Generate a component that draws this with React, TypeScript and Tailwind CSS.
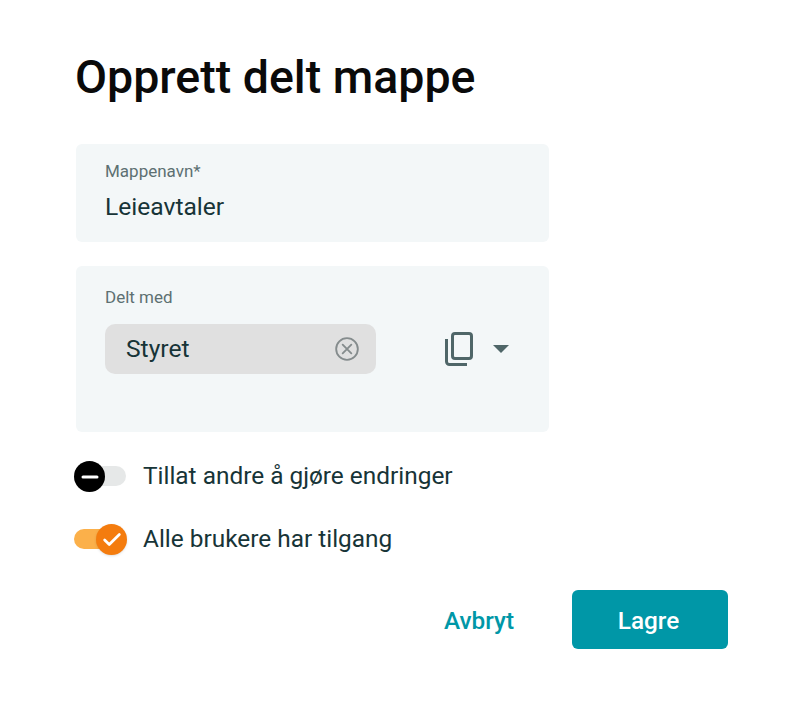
import React from 'react';
import { Check, Minus } from 'lucide-react';

const CopyIcon = () => (
  <svg width="28" height="34" viewBox="0 0 28 34" fill="none" stroke="#4f6668" strokeWidth="3">
    <rect x="7.5" y="1.5" width="19" height="25" rx="2.5" />
    <path d="M1.5 7V29.5C1.5 31.2 2.8 32.5 4.5 32.5H22" />
  </svg>
);

const ClearIcon = () => (
  <svg width="26" height="26" viewBox="0 0 24 24" fill="none" stroke="#858c8d" strokeWidth="1.7" strokeLinecap="round">
    <circle cx="12" cy="12" r="10" />
    <path d="M8 8L16 16M16 8L8 16" />
  </svg>
);

export default function App() {
  return (
    <div className="w-[800px] h-[715px] bg-white pl-[76px] pt-[50px] font-['Roboto',sans-serif]">
      <h1 className="text-[46.5px] leading-[54px] font-medium text-[#0a0a0a] mb-[40px] -ml-[1px]">Opprett delt mappe</h1>

      <div className="w-[473px] h-[98px] bg-[#f3f7f8] rounded-md px-[29px] pt-[17px] mb-6">
        <div className="text-[17px] leading-[20px] text-[#5d7072]">Mappenavn*</div>
        <div className="text-[24.6px] leading-[30px] mt-[11px] text-[#173437]">Leieavtaler</div>
      </div>

      <div className="w-[473px] h-[166px] bg-[#f3f7f8] rounded-md px-[29px] pt-[21px]">
        <div className="text-[17px] leading-[20px] text-[#5d7072]">Delt med</div>
        <div className="flex items-center mt-[17px]">
          <div className="w-[271px] h-[50px] bg-[#e0e0e0] rounded-[10px] flex items-center justify-between pl-[21px] pr-[16px]">
            <span className="text-[24.6px] text-[#173437]">Styret</span>
            <ClearIcon />
          </div>
          <div className="ml-[69px] flex"><CopyIcon /></div>
          <div className="ml-[20px] w-0 h-0 border-x-[8px] border-x-transparent border-t-[8px] border-t-[#4f6668]" />
        </div>
      </div>

      <div className="flex items-center h-[30px] mt-[29px] -ml-[2px]">
        <div className="relative w-[52px] h-[20px] bg-[#e6e8e8] rounded-full">
          <div className="absolute left-0 -top-[5px] w-[31px] h-[31px] bg-black rounded-full flex items-center justify-center">
            <Minus size={24} strokeWidth={3} color="#fff" />
          </div>
        </div>
        <span className="ml-[17px] text-[24.4px] text-[#173437]">Tillat andre å gjøre endringer</span>
      </div>

      <div className="flex items-center h-[30px] mt-[33px] -ml-[2px]">
        <div className="relative w-[52px] h-[20px] bg-[#fbb04a] rounded-full">
          <div className="absolute -right-[1px] -top-[5px] w-[31px] h-[31px] bg-[#f47c0e] rounded-full flex items-center justify-center shadow-sm">
            <Check size={22} strokeWidth={3} color="#fff" />
          </div>
        </div>
        <span className="ml-[17px] text-[24.4px] text-[#173437]">Alle brukere har tilgang</span>
      </div>

      <div className="w-[652px] flex items-center justify-end mt-[36px]">
        <span className="text-[24.3px] font-medium text-[#0097a7] mr-[58px] pt-[4px]">Avbryt</span>
        <div className="w-[156px] h-[59px] bg-[#0097a7] rounded-md flex items-center justify-center pt-[4px] pr-[3px] text-[24.3px] font-medium text-white">Lagre</div>
      </div>
    </div>
  );
}
